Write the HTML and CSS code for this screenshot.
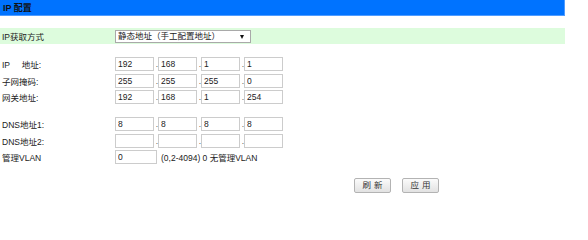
FILE: index.html
```html
<!DOCTYPE html>
<html lang="zh-CN">
<head>
<meta charset="utf-8">
<title>IP 配置</title>
<link rel="stylesheet" href="styles.css">
</head>
<body>
<div class="panel">
  <div class="title">IP 配置</div>

  <div class="row green">
    <div class="label">IP获取方式</div>
    <div class="select-wrap">
      <select class="select">
        <option>静态地址（手工配置地址）</option>
      </select>
      <span class="arrow"></span>
    </div>
  </div>

  <div class="group first">
    <div class="row">
      <div class="label">IP&nbsp;&nbsp;&nbsp;&nbsp;&nbsp;地址:</div>
      <div class="ip">
        <input class="octet" value="192"><span class="dot">.</span><input class="octet" value="168"><span class="dot">.</span><input class="octet" value="1"><span class="dot">.</span><input class="octet" value="1">
      </div>
    </div>
    <div class="row">
      <div class="label">子网掩码:</div>
      <div class="ip">
        <input class="octet" value="255"><span class="dot">.</span><input class="octet" value="255"><span class="dot">.</span><input class="octet" value="255"><span class="dot">.</span><input class="octet" value="0">
      </div>
    </div>
    <div class="row">
      <div class="label">网关地址:</div>
      <div class="ip">
        <input class="octet" value="192"><span class="dot">.</span><input class="octet" value="168"><span class="dot">.</span><input class="octet" value="1"><span class="dot">.</span><input class="octet" value="254">
      </div>
    </div>
  </div>

  <div class="group second">
    <div class="row">
      <div class="label">DNS地址1:</div>
      <div class="ip">
        <input class="octet" value="8"><span class="dot">.</span><input class="octet" value="8"><span class="dot">.</span><input class="octet" value="8"><span class="dot">.</span><input class="octet" value="8">
      </div>
    </div>
    <div class="row">
      <div class="label">DNS地址2:</div>
      <div class="ip">
        <input class="octet" value=""><span class="dot">.</span><input class="octet" value=""><span class="dot">.</span><input class="octet" value=""><span class="dot">.</span><input class="octet" value="">
      </div>
    </div>
    <div class="row">
      <div class="label">管理VLAN</div>
      <input class="vlan" value="0">
      <span class="hint">(0,2-4094) 0 无管理VLAN</span>
    </div>
  </div>

  <div class="buttons">
    <button class="btn">刷新</button>
    <button class="btn">应用</button>
  </div>
</div>
</body>
</html>
```

FILE: styles.css
```css
html, body {
  margin: 0;
  padding: 0;
  background: #ffffff;
}

body {
  font-family: "Liberation Sans", "Noto Sans CJK SC", sans-serif;
  font-size: 8.5px;
  color: #222222;
}

.panel {
  width: 565px;
}

.title {
  height: 16px;
  line-height: 16px;
  box-sizing: border-box;
  padding-left: 3px;
  background: #0073ff;
  border-right: 1px solid #4f9cff;
  border-bottom: 1px solid #4f9cff;
  font-weight: bold;
  font-size: 9px;
  color: #111111;
}

.row {
  display: flex;
  align-items: center;
  height: 16.5px;
}

.row.green {
  margin-top: 12px;
  height: 16px;
  background: #ddfcdd;
}

.label {
  width: 115px;
  padding-left: 2px;
  box-sizing: border-box;
  white-space: pre;
}

.select-wrap {
  position: relative;
  width: 136px;
  height: 13px;
}

.select {
  appearance: none;
  -webkit-appearance: none;
  width: 100%;
  height: 13px;
  margin: 0;
  box-sizing: border-box;
  padding: 0 0 0 2px;
  border: 1px solid #a9a9a9;
  border-radius: 0;
  background: #ffffff;
  font-family: inherit;
  font-size: 8.5px;
  color: #222222;
  line-height: 11px;
}

.arrow {
  position: absolute;
  right: 7px;
  top: 5px;
  width: 0;
  height: 0;
  border-left: 2.5px solid transparent;
  border-right: 2.5px solid transparent;
  border-top: 4px solid #111111;
  pointer-events: none;
}

.group.first {
  margin-top: 12px;
}

.group.second {
  margin-top: 10.5px;
}

.ip {
  display: flex;
  align-items: center;
}

.octet,
.vlan {
  width: 39px;
  height: 14px;
  margin: 0;
  box-sizing: border-box;
  padding: 0 2px;
  border: 1px solid #cccccc;
  border-radius: 0;
  background: #ffffff;
  font-family: inherit;
  font-size: 8.5px;
  color: #222222;
  outline: none;
}

.vlan {
  width: 42px;
}

.dot {
  width: 4px;
  height: 14px;
  line-height: 15px;
  text-align: right;
  color: #555555;
  font-size: 8.5px;
}

.hint {
  margin-left: 4px;
}

.buttons {
  display: flex;
  gap: 11px;
  margin-top: 12px;
  padding-left: 354px;
}

.btn {
  width: 37px;
  height: 15px;
  margin: 0;
  padding: 0;
  box-sizing: border-box;
  border: 1px solid #b3b3b3;
  border-radius: 2px;
  background: linear-gradient(#fbfbfb, #e2e2e2);
  font-family: "Liberation Sans", "Noto Sans CJK SC", sans-serif;
  font-size: 8.5px;
  color: #333333;
  letter-spacing: 3px;
  text-indent: 3px;
  line-height: 13px;
}
```
